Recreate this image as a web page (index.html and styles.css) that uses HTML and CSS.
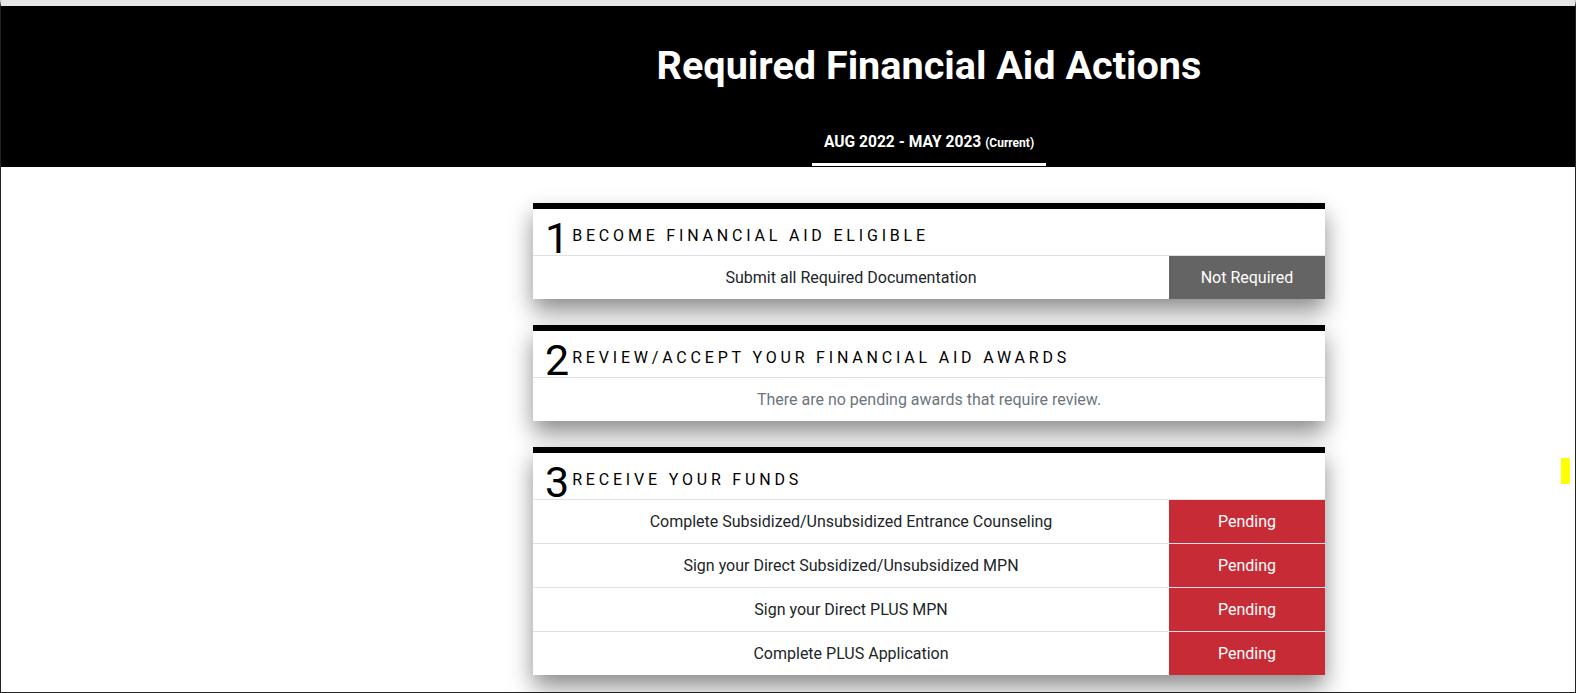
FILE: index.html
```html
<!DOCTYPE html>
<html lang="en">
<head>
<meta charset="utf-8">
<title>Required Financial Aid Actions</title>
<link rel="stylesheet" href="styles.css">
</head>
<body>
<div class="frame">
  <header class="hero">
    <div class="hero-inner">
      <h1 class="hero-title">Required Financial Aid Actions</h1>
      <div class="tabs">
        <span class="tab">AUG 2022 - MAY 2023 <small class="tab-note">(Current)</small></span>
      </div>
    </div>
  </header>

  <main class="content">
    <section class="card">
      <div class="card-head">
        <span class="step-num">1</span>
        <h2 class="step-title">BECOME FINANCIAL AID ELIGIBLE</h2>
      </div>
      <div class="row">
        <div class="task">Submit all Required Documentation</div>
        <div class="status status-muted">Not Required</div>
      </div>
    </section>

    <section class="card">
      <div class="card-head">
        <span class="step-num">2</span>
        <h2 class="step-title">REVIEW/ACCEPT YOUR FINANCIAL AID AWARDS</h2>
      </div>
      <div class="row">
        <div class="task task-empty">There are no pending awards that require review.</div>
      </div>
    </section>

    <section class="card">
      <div class="card-head">
        <span class="step-num">3</span>
        <h2 class="step-title">RECEIVE YOUR FUNDS</h2>
      </div>
      <div class="row">
        <div class="task">Complete Subsidized/Unsubsidized Entrance Counseling</div>
        <div class="status status-pending">Pending</div>
      </div>
      <div class="row">
        <div class="task">Sign your Direct Subsidized/Unsubsidized MPN</div>
        <div class="status status-pending">Pending</div>
      </div>
      <div class="row">
        <div class="task">Sign your Direct PLUS MPN</div>
        <div class="status status-pending">Pending</div>
      </div>
      <div class="row">
        <div class="task">Complete PLUS Application</div>
        <div class="status status-pending">Pending</div>
      </div>
    </section>
  </main>

  <span class="marker"></span>
</div>
</body>
</html>
```

FILE: styles.css
```css
* { box-sizing: border-box; }

html, body {
  margin: 0;
  padding: 0;
  background: #fff;
}

body {
  font-family: Roboto, "Liberation Sans", Arial, sans-serif;
  color: #212529;
}

.frame {
  position: relative;
  width: 1576px;
  height: 693px;
  overflow: hidden;
  border-top: 6px solid #e6e6e6;
  border-left: 1px solid #222;
  border-right: 1px solid #222;
  border-bottom: 1px solid #222;
  background: #fff;
}

.hero {
  height: 161px;
  background: #000;
  padding-left: 282px;
  padding-top: 36px;
}

.hero-inner {
  display: flex;
  flex-direction: column;
  align-items: center;
}

.hero-title {
  margin: 0;
  font-size: 39.6px;
  line-height: 48px;
  font-weight: 700;
  color: #fff;
}

.tabs {
  margin-top: 42px;
}

.tab {
  display: inline-block;
  padding: 0 12px 9px;
  border-bottom: 3px solid #fff;
  color: #fff;
  font-size: 15.6px;
  line-height: 21px;
  font-weight: 700;
}

.tab-note {
  font-size: 12px;
  font-weight: 700;
}

.content {
  padding-left: 282px;
  padding-top: 36px;
}

.card {
  width: 792px;
  margin: 0 auto 26px;
  background: #fff;
  border-top: 6px solid #000;
  box-shadow: 0 12px 22px rgba(0, 0, 0, 0.45);
}

.card-head {
  display: flex;
  align-items: flex-start;
  height: 46px;
  padding: 8px 0 0 12px;
}

.step-num {
  font-size: 43px;
  line-height: 43px;
  font-weight: 400;
  color: #000;
}

.step-title {
  margin: 9px 0 0 3px;
  font-size: 16px;
  line-height: 20px;
  font-weight: 400;
  letter-spacing: 0.238em;
  color: #000;
}

.row {
  display: flex;
  height: 44px;
  padding-bottom: 1px;
  border-top: 1px solid #dee2e6;
}

.task {
  flex: 1;
  display: flex;
  align-items: center;
  justify-content: center;
  font-size: 16px;
  color: #212529;
}

.task-empty {
  color: #6c757d;
}

.status {
  width: 156px;
  margin-bottom: -1px;
  display: flex;
  align-items: center;
  justify-content: center;
  font-size: 16px;
  color: #fff;
}

.status-muted {
  background: #646464;
}

.status-pending {
  background: #c72c36;
}

.marker {
  position: absolute;
  left: 1560px;
  top: 452px;
  width: 9px;
  height: 26px;
  background: #ffff00;
}
```
